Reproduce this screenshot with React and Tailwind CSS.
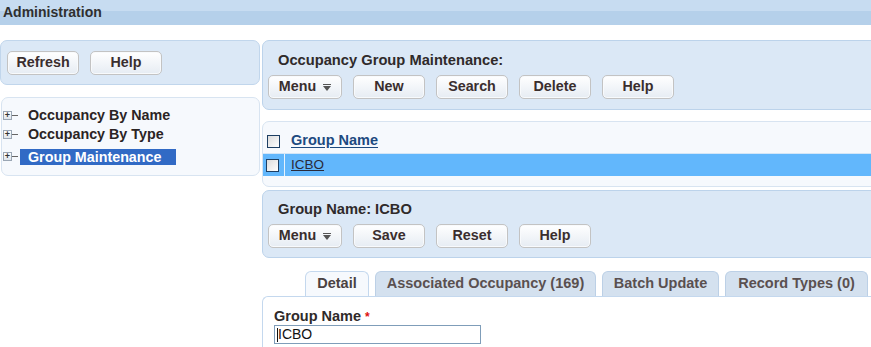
import React from "react";

const font = { fontFamily: '"Liberation Sans", Arial, sans-serif' };

function Btn({ children, w = "w-[72px]", menu }) {
  return (
    <button className={`${w} h-[24px] rounded-[5px] border border-[#c3c3c3] bg-[linear-gradient(#ffffff,#e6ecf3)] text-[14.3px] font-bold text-[#3a2e2e] flex items-center justify-center gap-[7px] shadow-[inset_0_0_0_1px_#f8fafc]`}>
      {children}
      {menu && (
        <span className="flex flex-col items-center gap-[1px]">
          <span className="block w-[8px] h-[1px] bg-[#555]" />
          <span className="block w-0 h-0 border-l-[4px] border-r-[4px] border-t-[5px] border-l-transparent border-r-transparent border-t-[#555]" />
        </span>
      )}
    </button>
  );
}

function Expander() {
  return (
    <span className="flex items-center w-[17px] shrink-0">
      <span className="w-[9px] h-[9px] border border-[#9aa6b4] bg-[linear-gradient(#ffffff,#dfe4ea)] flex items-center justify-center text-[9px] leading-none text-[#333]">
        +
      </span>
      <span className="w-[6px] h-[1px] bg-[#666]" />
    </span>
  );
}

function Checkbox() {
  return <span className="block w-[13px] h-[13px] border border-[#1d3f63] bg-[linear-gradient(135deg,#dcdcdc,#ffffff)]" />;
}

export default function App() {
  return (
    <div className="w-[871px] h-[347px] overflow-hidden bg-white" style={font}>
      <div className="h-[25px] bg-[linear-gradient(#c7dcf1_0_11px,#b5d0ea_11px)] pl-[3px] text-[14px] font-bold text-[#2f2f2f] leading-[24px]">
        Administration
      </div>

      <div className="flex mt-[15px]">
        <div className="w-[260px] shrink-0">
          <div className="h-[45px] rounded-[7px] border border-[#c1d6ec] bg-[#dbe8f6] flex items-center gap-[11px] px-[6px]">
            <Btn>Refresh</Btn>
            <Btn>Help</Btn>
          </div>
          <div className="mt-[12px] ml-[1px] h-[79px] rounded-[7px] border border-[#d8e4f1] bg-[#f6f9fd] pt-[8px] pl-[1px] text-[14.3px] font-bold text-[#2b2424]">
            <div className="flex items-center h-[19px]">
              <Expander />
              <span className="ml-[8px]">Occupancy By Name</span>
            </div>
            <div className="flex items-center h-[19px]">
              <Expander />
              <span className="ml-[8px]">Occupancy By Type</span>
            </div>
            <div className="flex items-center h-[19px] mt-[3px]">
              <Expander />
              <span className="bg-[#316ac5] text-white h-[16px] leading-[16px] pl-[8px] w-[156px]">Group Maintenance</span>
            </div>
          </div>
        </div>

        <div className="ml-[2px] w-[640px] shrink-0">
          <div className="h-[70px] rounded-[7px] border border-[#bcd3eb] bg-[#dbe8f6] pl-[5px]">
            <div className="pl-[10px] pt-[10px] text-[14.7px] font-bold text-[#2f2a2a] leading-[18px]">Occupancy Group Maintenance:</div>
            <div className="flex gap-[11px] mt-[6px]">
              <Btn w="w-[74px]" menu>Menu</Btn>
              <Btn>New</Btn>
              <Btn>Search</Btn>
              <Btn>Delete</Btn>
              <Btn>Help</Btn>
            </div>
          </div>

          <div className="mt-[11px] h-[66px] rounded-[7px] border border-[#d8e4f1] bg-[#f6f9fd] pt-[8px]">
            <div className="flex items-center h-[22px] pl-[4px]">
              <Checkbox />
              <span className="ml-[11px] text-[14.5px] font-bold text-[#1d4a80] underline underline-offset-2">Group Name</span>
            </div>
            <div className="flex items-center h-[23px] mt-[1px] bg-[#62b7fc] border-t border-[#d4e6f7]">
              <span className="w-[22px] flex items-center justify-end pr-[5px] h-full border-r border-[#e8f3fc]">
                <Checkbox />
              </span>
              <span className="ml-[6px] text-[13.5px] text-[#2a2a3a] underline">ICBO</span>
            </div>
          </div>

          <div className="mt-[3px] h-[68px] rounded-[7px] border border-[#bcd3eb] bg-[#dbe8f6] pl-[5px]">
            <div className="pl-[10px] pt-[9px] text-[14.7px] font-bold text-[#2f2a2a] leading-[18px]">Group Name: ICBO</div>
            <div className="flex gap-[11px] mt-[6px]">
              <Btn w="w-[74px]" menu>Menu</Btn>
              <Btn>Save</Btn>
              <Btn>Reset</Btn>
              <Btn>Help</Btn>
            </div>
          </div>

          <div className="mt-[13px] flex items-end h-[25px] pl-[43px] gap-[6px] text-[14.5px] font-bold text-[#5a5050]">
            <div className="h-[25px] w-[64px] rounded-t-[6px] border border-b-0 border-[#c4d8ee] bg-[#f6f9fd] flex items-center justify-center text-[#4a4242]">Detail</div>
            <div className="h-[25px] w-[221px] rounded-t-[6px] border border-b-0 border-[#bcd0e6] bg-[#d4e1ef] flex items-center justify-center">Associated Occupancy (169)</div>
            <div className="h-[25px] w-[117px] rounded-t-[6px] border border-b-0 border-[#bcd0e6] bg-[#d4e1ef] flex items-center justify-center">Batch Update</div>
            <div className="h-[25px] w-[143px] rounded-t-[6px] border border-b-0 border-[#bcd0e6] bg-[#d4e1ef] flex items-center justify-center">Record Types (0)</div>
          </div>
          <div className="h-[60px] rounded-tl-[6px] border-t border-l border-[#c4d8ee] bg-white pl-[11px] pt-[11px]">
            <div className="text-[14.5px] font-bold text-[#2f2a2a] leading-[16px]">
              Group Name <span className="text-[#d11] text-[12px]">*</span>
            </div>
            <div className="w-[207px] h-[19px] border border-[#7f9db9] bg-white text-[14px] leading-[17px] pl-[2px] text-[#111] flex items-center">
              <span className="w-[1px] h-[14px] bg-[#111]" />
              ICBO
            </div>
          </div>
        </div>
      </div>
    </div>
  );
}
